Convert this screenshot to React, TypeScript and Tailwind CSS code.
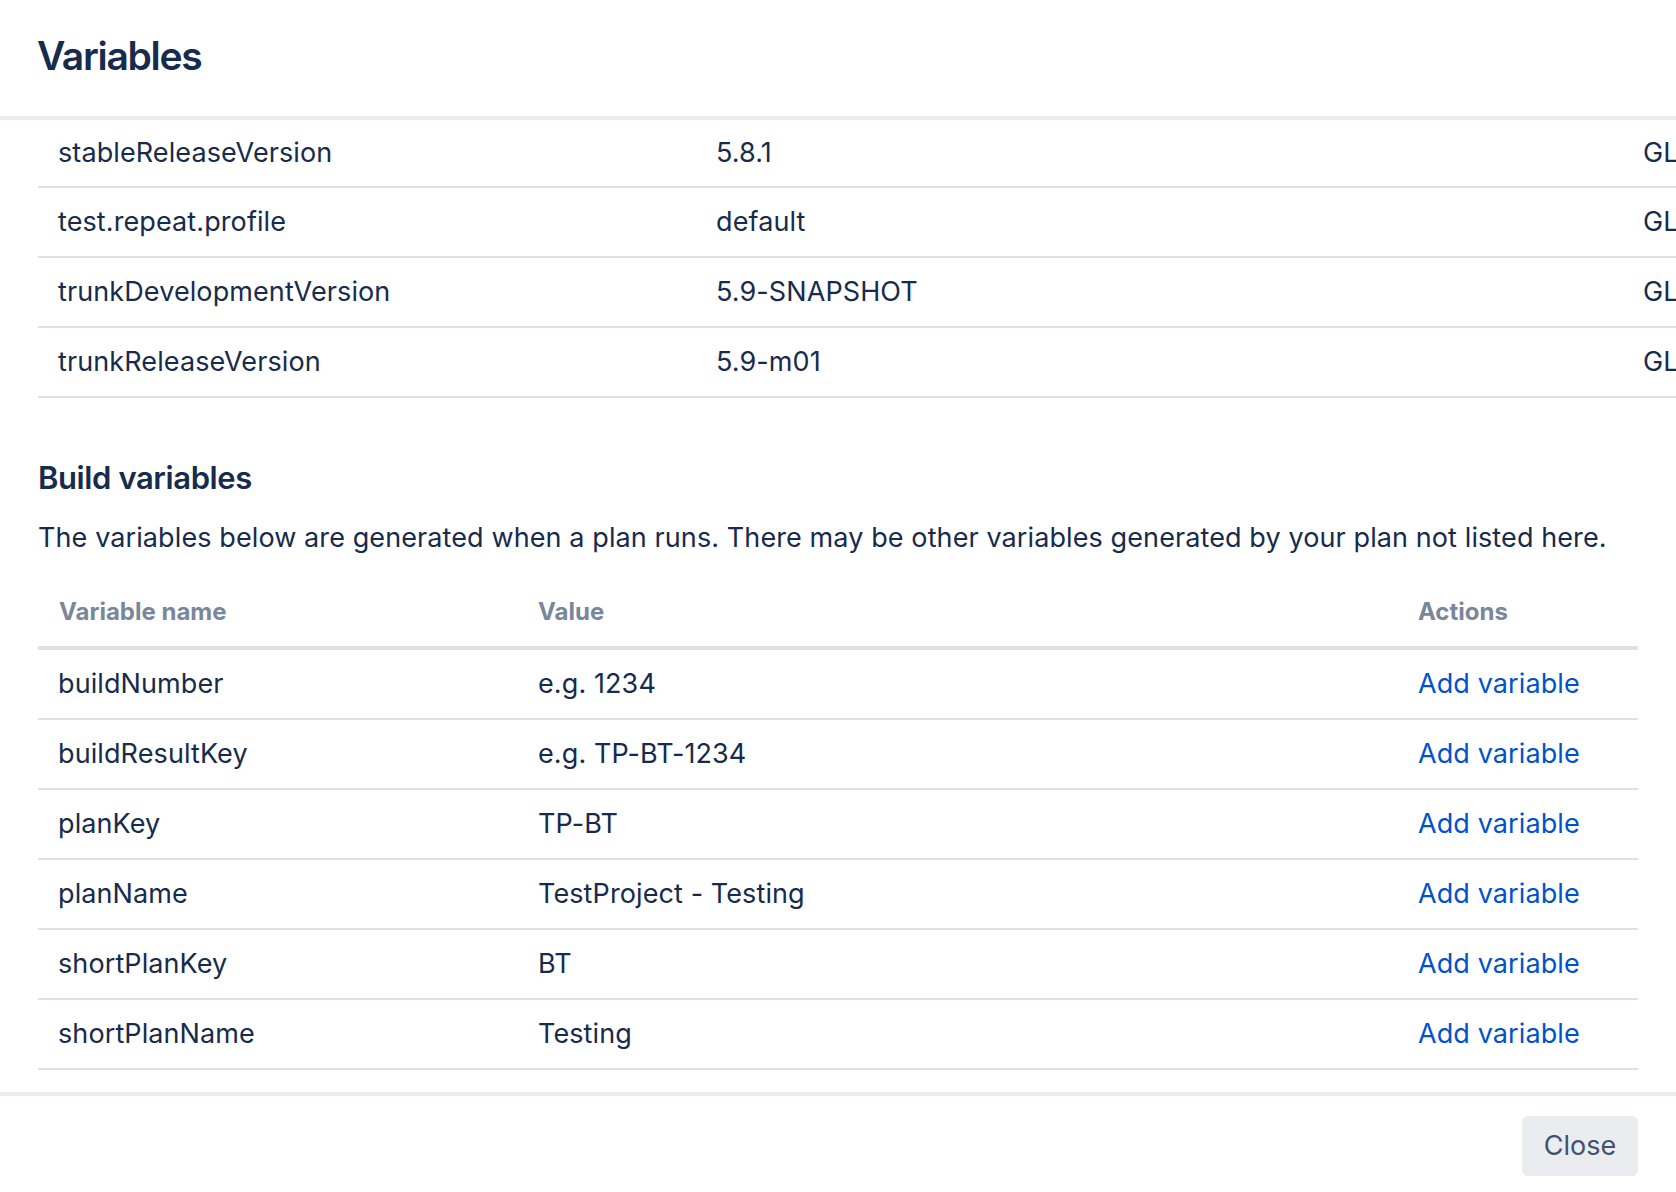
const globals = [
  { name: "stableReleaseVersion", value: "5.8.1" },
  { name: "test.repeat.profile", value: "default" },
  { name: "trunkDevelopmentVersion", value: "5.9-SNAPSHOT" },
  { name: "trunkReleaseVersion", value: "5.9-m01" },
];

const buildVars = [
  { name: "buildNumber", value: "e.g. 1234" },
  { name: "buildResultKey", value: "e.g. TP-BT-1234" },
  { name: "planKey", value: "TP-BT" },
  { name: "planName", value: "TestProject - Testing" },
  { name: "shortPlanKey", value: "BT" },
  { name: "shortPlanName", value: "Testing" },
];

export default function App() {
  return (
    <div
      className="flex h-[1192px] w-[1676px] flex-col overflow-hidden bg-white text-[#172b4d]"
      style={{ fontFamily: "Inter, 'Noto Sans', sans-serif" }}
    >
      <header className="h-[120px] shrink-0 border-b-4 border-[#ebecf0] px-[37px] pt-[32px]">
        <h1 className="text-[39px] font-semibold leading-[48px] tracking-[-1.3px]">Variables</h1>
      </header>

      <div className="flex-1 overflow-hidden px-[38px] text-[27px] tracking-[0.1px]">
        {/* global variables, scrolled partly out of view */}
        <div className="w-[1800px]">
          {globals.map((row, index) => (
            <div
              key={row.name}
              className={`flex items-center border-b-2 border-[#dfe1e6] ${index === 0 ? "h-[68px]" : "h-[70px]"}`}
            >
              <div className="w-[658px] pl-[20px]">{row.name}</div>
              <div className="w-[927px] pl-[20px]">{row.value}</div>
              <div className="flex-1 pl-[20px]">GLOBAL</div>
            </div>
          ))}
        </div>

        <section className="mt-[60px]">
          <h2 className="text-[31px] font-semibold leading-[40px] tracking-[-0.4px]">Build variables</h2>
          <p className="mt-[22px] leading-[36px]">
            The variables below are generated when a plan runs. There may be other variables generated by your plan not listed here.
          </p>

          <div className="mt-[25px] w-full">
            <div className="flex border-b-4 border-[#dfe1e6] pt-[14px] pb-[17px] text-[24px] font-bold leading-[34px] tracking-normal text-[#7a869a]">
              <div className="w-[480px] pl-[21px]">Variable name</div>
              <div className="w-[880px] pl-[20px]">Value</div>
              <div className="flex-1 pl-[20px]">Actions</div>
            </div>
            {buildVars.map((row) => (
              <div key={row.name} className="flex h-[70px] items-center border-b-2 border-[#dfe1e6]">
                <div className="w-[480px] pl-[20px]">{row.name}</div>
                <div className="w-[880px] pl-[20px]">{row.value}</div>
                <div className="flex-1 pl-[20px]">
                  <a href="#" className="text-[#0052cc]">
                    Add variable
                  </a>
                </div>
              </div>
            ))}
          </div>
        </section>
      </div>

      <footer className="flex h-[100px] shrink-0 justify-end border-t-4 border-[#ebecf0] px-[38px] pt-[20px]">
        <button className="h-[60px] w-[116px] rounded-[6px] bg-[#ebecf0] text-[27px] text-[#42526e]">Close</button>
      </footer>
    </div>
  );
}
